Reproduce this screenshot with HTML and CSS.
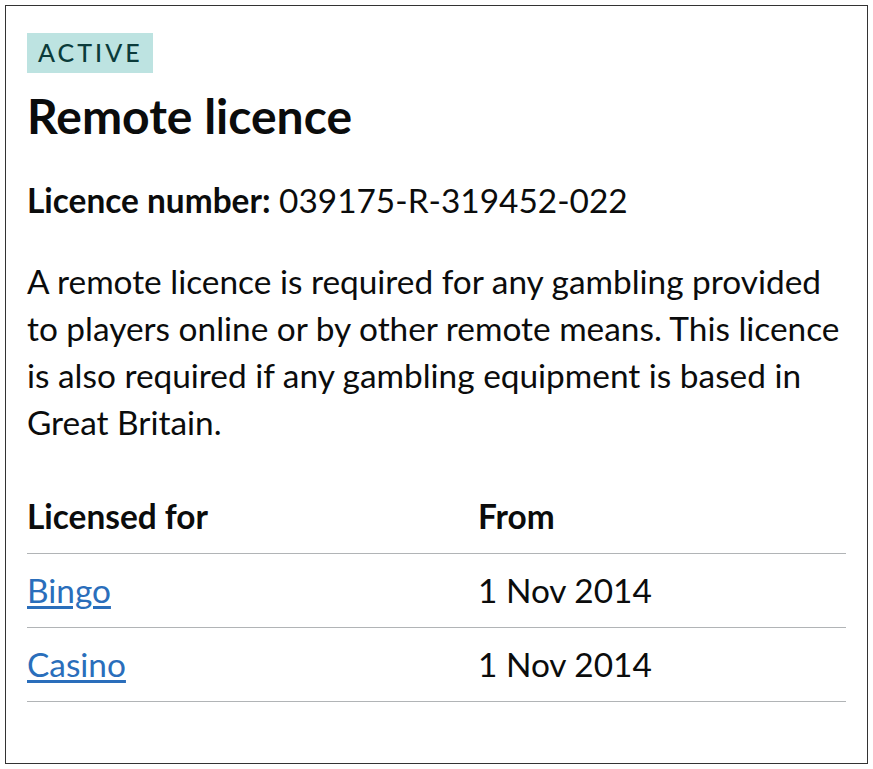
FILE: index.html
```html
<!DOCTYPE html>
<html lang="en">
<head>
    <meta charset="UTF-8">
    <meta name="viewport" content="width=device-width, initial-scale=1.0">
    <title>Remote licence</title>
    <link rel="stylesheet" href="styles.css">
</head>
<body>
    <div class="licence-card">
        <span class="status-tag">ACTIVE</span>
        <h2 class="licence-title">Remote licence</h2>
        <p class="licence-number"><strong>Licence number:</strong> 039175-R-319452-022</p>
        <p class="licence-desc">A remote licence is required for any gambling provided to players online or by other remote means. This licence is also required if any gambling equipment is based in Great Britain.</p>
        <table class="activity-table">
            <thead>
                <tr>
                    <th>Licensed for</th>
                    <th>From</th>
                </tr>
            </thead>
            <tbody>
                <tr><td><a href="#">Bingo</a></td><td>1 Nov 2014</td></tr>
                <tr><td><a href="#">Casino</a></td><td>1 Nov 2014</td></tr>
            </tbody>
        </table>
    </div>
</body>
</html>
```
FILE: styles.css
```css
body {
    margin: 0;
    padding: 5px;
    background: #fff;
    font-family: 'Lato', 'Noto Sans', sans-serif;
    color: #0b0c0c;
}

.licence-card {
    border: 1px solid #333;
    box-sizing: border-box;
    height: 759px;
    width: 863px;
    padding: 27px 21px 0 21px;
}

.status-tag {
    display: inline-block;
    background-color: #bde3e1;
    color: #0b3b3a;
    font-size: 25px;
    font-weight: 500;
    letter-spacing: 3px;
    padding: 4px 10px 5px 11px;
    line-height: 31px;
}

.licence-title {
    font-size: 48px;
    font-weight: 700;
    margin: 14px 0 32px 0;
    line-height: 58px;
}

.licence-number {
    font-size: 33.4px;
    margin: 0 0 34px 0;
    line-height: 47px;
}

.licence-number strong {
    font-weight: 700;
}

.licence-desc {
    font-size: 33.4px;
    line-height: 47px;
    margin: 0 0 51px 0;
}

.activity-table {
    width: 100%;
    border-collapse: collapse;
    font-size: 33.4px;
}

.activity-table th,
.activity-table td {
    text-align: left;
    border-bottom: 1px solid #b1b4b6;
    padding: 17px 0 18px 0;
    line-height: 38px;
}

.activity-table th {
    font-weight: 700;
    padding-top: 0;
}

.activity-table th:first-child,
.activity-table td:first-child {
    width: 451px;
}

.activity-table a {
    color: #2a6ebb;
    text-decoration: underline;
    text-underline-offset: 3px;
}
```
